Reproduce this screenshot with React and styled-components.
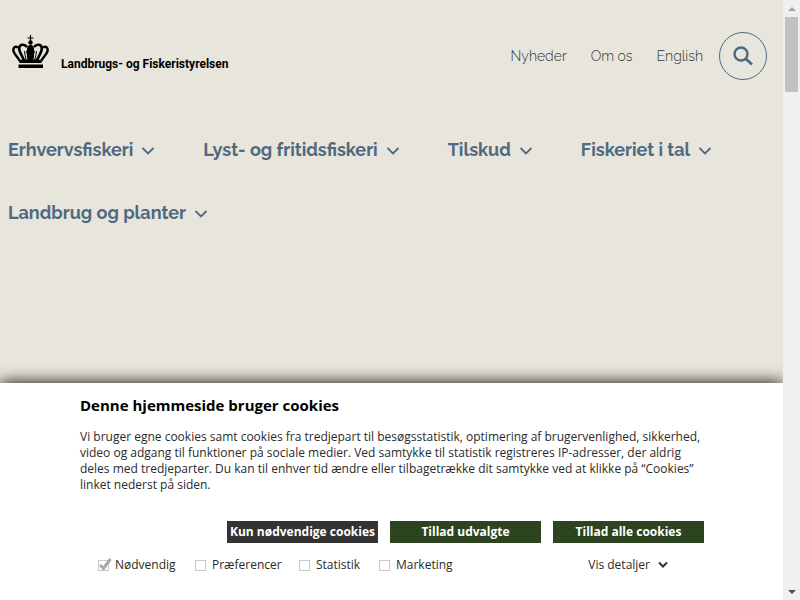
import React from 'react';
import styled, { createGlobalStyle } from 'styled-components';

const GlobalStyle = createGlobalStyle`
  * {
    box-sizing: border-box;
  }

  body {
    margin: 0;
    background-color: #e8e5dc;
    font-family: 'Open Sans', 'Noto Sans', sans-serif;
  }
`;

const Shell = styled.div`
  display: grid;
  grid-template-columns: minmax(0, 1fr) 17px;
  height: 100vh;
  overflow: hidden;
`;

const Page = styled.div`
  display: flex;
  flex-direction: column;
  justify-content: space-between;
`;

const Header = styled.header`
  display: flex;
  align-items: center;
  justify-content: space-between;
  padding: 32px 16px 0 12px;
`;

const Logo = styled.a`
  display: flex;
  align-items: flex-end;
  gap: 12px;
  height: 34px;
  color: #000;
  font-family: Roboto, 'Liberation Sans', sans-serif;
  font-size: 12px;
  font-weight: 700;
  line-height: 18px;
  text-decoration: none;

  svg {
    margin-bottom: 4px;
  }
`;

const ServiceNav = styled.nav`
  display: flex;
  align-items: center;
  gap: 24px;
`;

const ServiceLink = styled.a`
  color: #333;
  font-family: Raleway, Lato, sans-serif;
  font-size: 14px;
  font-weight: 300;
  line-height: 24px;
  text-decoration: none;
`;

const SearchButton = styled.button`
  display: grid;
  place-items: center;
  width: 48px;
  height: 48px;
  margin-left: -8px;
  padding: 0;
  border: 1px solid #4f6a80;
  border-radius: 50%;
  background: none;
  color: #4f6a80;
`;

const MainNav = styled.nav`
  display: flex;
  flex-wrap: wrap;
  gap: 39px 48px;
  padding: 58px 8px 0;
`;

const MenuButton = styled.button`
  display: flex;
  align-items: center;
  gap: 8px;
  padding: 0;
  border: 0;
  background: none;
  color: #4f6a80;
  font-family: Raleway, Lato, sans-serif;
  font-size: 18px;
  font-weight: 700;
  line-height: 24px;
`;

const Banner = styled.section`
  padding: 12px 79px 27px 80px;
  background-color: #fff;
  box-shadow: 0 0 16px #000;
  color: #2a2a2a;
  font-size: 12px;
  line-height: 16px;
`;

const Title = styled.h2`
  margin: 0 0 14px;
  color: #000;
  font-size: 15px;
  line-height: 20px;
`;

const Text = styled.p`
  margin: 0 0 28px;
  white-space: nowrap;
`;

const Actions = styled.div`
  display: flex;
  justify-content: flex-end;
  gap: 12px;
`;

const ActionButton = styled.button`
  width: 151px;
  height: 22px;
  padding: 0;
  border: 0;
  background-color: ${({ $dark }) => ($dark ? '#333' : '#2c441f')};
  color: #fff;
  font-family: inherit;
  font-size: 12px;
  font-weight: 700;
  line-height: 22px;
  white-space: nowrap;
`;

const Options = styled.div`
  display: flex;
  align-items: center;
  margin-top: 14px;
  padding-left: 18px;
`;

const Option = styled.label`
  display: flex;
  align-items: center;
  gap: 6px;
  width: ${({ $width }) => $width}px;
`;

const Checkbox = styled.input`
  appearance: none;
  flex: none;
  width: 11px;
  height: 11px;
  margin: 0;
  border: 1px solid #c8c8c8;
  background-color: #fff;
`;

const CheckboxWrap = styled.span`
  position: relative;
  display: flex;

  svg {
    position: absolute;
    left: 1px;
    bottom: 0;
  }
`;

const Details = styled.button`
  display: flex;
  align-items: center;
  gap: 8px;
  margin-left: auto;
  margin-right: 36px;
  padding: 0;
  border: 0;
  background: none;
  color: #2a2a2a;
  font: inherit;
`;

const Scrollbar = styled.div`
  display: flex;
  flex-direction: column;
  align-items: center;
  position: relative;
  background-color: #f0f0f0;
`;

const ScrollArrow = styled.div`
  display: grid;
  place-items: center;
  height: 17px;
  color: ${({ $color }) => $color};
`;

const ScrollThumb = styled.div`
  width: 13px;
  height: 75px;
  margin-bottom: auto;
  background-color: #c1c1c1;
`;

const Crown = () => (
  <svg width="37" height="34" viewBox="0 0 37 34" aria-hidden="true">
    <path d="M18.5 0v6M15.5 3h6" stroke="#000" strokeWidth="1.2" />
    <circle cx="18.5" cy="7.5" r="2.2" />
    <path d="M18.5 9.5c2.8 1 4.200 3 3.300 5 1.300 1.600 1.300 3 .2 4.500.6 2.500-.4 5-1.500 7h-4c-1.100-2-2.100-4.500-1.500-7-1.100-1.500-1.100-2.900.2-4.500-.9-2 .5-4 3.300-5z" />
    <g fill="none" stroke="#000">
      <path d="M15 12c-2.500-3.500-7.800-3-7.800 1.500 0 4 3.500 8 4.800 12" strokeWidth="2.600" />
      <path d="M22 12c2.500-3.500 7.800-3 7.800 1.500 0 4-3.500 8-4.800 12" strokeWidth="2.600" />
      <path d="M6 12.500C3 10.500.6 13 1.600 16.500 2.800 20 6 22 7.800 26" strokeWidth="2.400" />
      <path d="M31 12.500c3-2 5.400.5 4.400 4-1.200 3.500-4.400 5.500-6.200 9.500" strokeWidth="2.400" />
      <path d="M12.500 16c.2 3 1 6 1.700 9M24.500 16c-.2 3-1 6-1.700 9" strokeWidth="1" />
    </g>
    <path d="M7 25q11.500-1.500 23 0l-.5 3h-22z" />
    <path d="M6.500 29.500h24.500v3.500h-24.500z" />
  </svg>
);

const Chevron = () => (
  <svg width="14" height="14" viewBox="0 0 14 14" fill="none" aria-hidden="true">
    <path d="m1.500 5 5.500 5.500L12.500 5" stroke="currentColor" strokeWidth="1.800" />
  </svg>
);

const menu = [
  'Erhvervsfiskeri',
  'Lyst- og fritidsfiskeri',
  'Tilskud',
  'Fiskeriet i tal',
  'Landbrug og planter'
];

const options = [
  { label: 'Nødvendig', width: 97, locked: true },
  { label: 'Præferencer', width: 104 },
  { label: 'Statistik', width: 80 },
  { label: 'Marketing', width: 80 }
];

const App = () => (
  <>
    <GlobalStyle />
    <Shell>
      <Page>
        <div>
          <Header>
            <Logo href="#">
              <Crown />
              Landbrugs- og Fiskeristyrelsen
            </Logo>
            <ServiceNav>
              <ServiceLink href="#">Nyheder</ServiceLink>
              <ServiceLink href="#">Om os</ServiceLink>
              <ServiceLink href="#">English</ServiceLink>
              <SearchButton type="button" aria-label="Søg">
                <svg width="22" height="22" viewBox="0 0 22 22" fill="none" aria-hidden="true">
                  <circle cx="9" cy="9" r="6.5" stroke="currentColor" strokeWidth="2.4" />
                  <path d="m13.500 13.500 6.500 6" stroke="currentColor" strokeWidth="2.800" />
                </svg>
              </SearchButton>
            </ServiceNav>
          </Header>
          <MainNav>
            {menu.map(item => (
              <MenuButton key={item} type="button">
                {item}
                <Chevron />
              </MenuButton>
            ))}
          </MainNav>
        </div>
        <Banner>
          <Title>Denne hjemmeside bruger cookies</Title>
          <Text>
            Vi bruger egne cookies samt cookies fra tredjepart til besøgsstatistik, optimering af brugervenlighed, sikkerhed,
            <br />
            video og adgang til funktioner på sociale medier. Ved samtykke til statistik registreres IP-adresser, der aldrig
            <br />
            deles med tredjeparter. Du kan til enhver tid ændre eller tilbagetrække dit samtykke ved at klikke på “Cookies”
            <br />
            linket nederst på siden.
          </Text>
          <Actions>
            <ActionButton type="button" $dark>Kun nødvendige cookies</ActionButton>
            <ActionButton type="button">Tillad udvalgte</ActionButton>
            <ActionButton type="button">Tillad alle cookies</ActionButton>
          </Actions>
          <Options>
            {options.map(({ label, width, locked }) => (
              <Option key={label} $width={width}>
                <CheckboxWrap>
                  <Checkbox type="checkbox" defaultChecked={locked} disabled={locked} />
                  {locked && (
                    <svg width="13" height="13" viewBox="0 0 13 13" fill="none" aria-hidden="true">
                      <path d="m1 7 3.500 3.500L11.500 1" stroke="#aaa" strokeWidth="3" />
                    </svg>
                  )}
                </CheckboxWrap>
                {label}
              </Option>
            ))}
            <Details type="button">
              Vis detaljer
              <svg width="10" height="8" viewBox="0 0 10 8" fill="none" aria-hidden="true">
                <path d="m1 1.500 4 4 4-4" stroke="#333" strokeWidth="2" />
              </svg>
            </Details>
          </Options>
        </Banner>
      </Page>
      <Scrollbar aria-hidden="true">
        <ScrollArrow $color="#a3a3a3">
          <svg width="8" height="4" viewBox="0 0 8 4">
            <path d="M0 4 4 0l4 4z" fill="currentColor" />
          </svg>
        </ScrollArrow>
        <ScrollThumb />
        <ScrollArrow $color="#505050">
          <svg width="8" height="4" viewBox="0 0 8 4">
            <path d="M0 0h8L4 4z" fill="currentColor" />
          </svg>
        </ScrollArrow>
      </Scrollbar>
    </Shell>
  </>
);

export default App;
